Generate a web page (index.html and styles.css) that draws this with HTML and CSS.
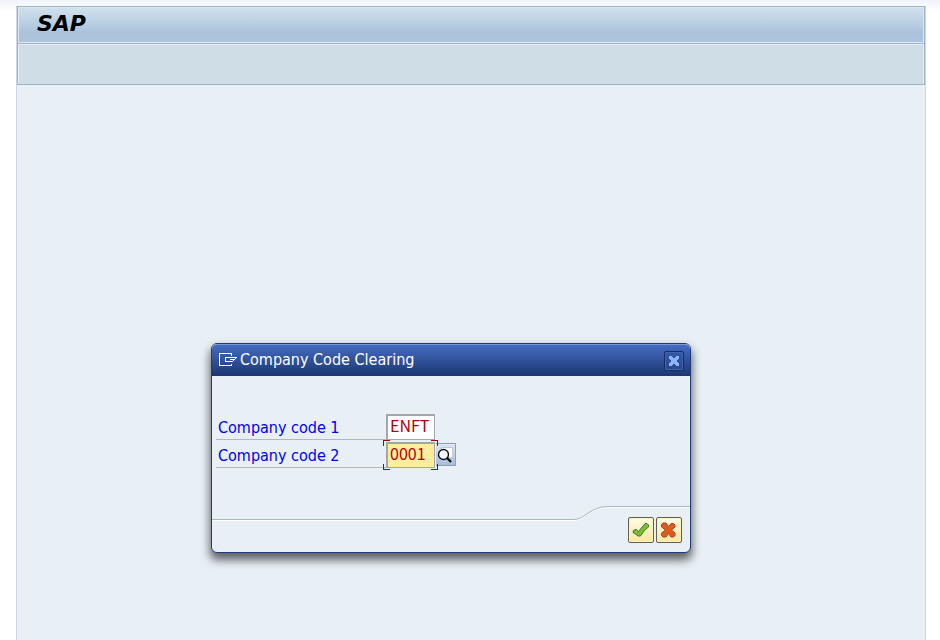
FILE: index.html
```html
<!DOCTYPE html>
<html lang="en">
<head>
  <meta charset="UTF-8">
  <meta name="viewport" content="width=device-width, initial-scale=1.0">
  <title>SAP</title>
  <link rel="stylesheet" href="styles.css">
</head>
<body>
  <div class="session">
    <header class="session-title">
      <h1>SAP</h1>
    </header>
    <div class="toolbar"></div>

    <main class="workspace">
      <form class="dialog" role="dialog" aria-labelledby="dialogTitle">
        <div class="dialog-title">
          <svg class="dialog-icon" width="18" height="14" viewBox="0 0 18 14" shape-rendering="crispEdges" aria-hidden="true">
            <path d="M12.500 3V.5H.5v12h12V11M17.500 4.500H6.500v4H12" fill="none" stroke="#fff"/>
            <path d="M16 5h1v1h-1zM15 6h1v1h-1zM11 6h4v1h-4zM14 7h1v1h-1zM12 8h2v1h-2z" fill="#fff"/>
          </svg>
          <h2 id="dialogTitle">Company Code Clearing</h2>
          <button type="button" class="close-btn" aria-label="Close">
            <svg width="12" height="12" viewBox="0 0 12 12" shape-rendering="crispEdges" aria-hidden="true">
              <path d="M1 1h3v1h1v1h2V2h1V1h3v3h-1v1H9v2h1v1h1v3H8v-1H7V9H5v1H4v1H1V8h1V7h1V5H2V4H1z" fill="#8db3ff"/>
            </svg>
          </button>
        </div>

        <div class="dialog-body">
          <div class="field-row">
            <label for="code1">Company code 1</label>
            <span class="field">
              <input type="text" id="code1" value="ENFT" maxlength="4">
            </span>
          </div>
          <div class="field-row">
            <label for="code2">Company code 2</label>
            <span class="field field-active">
              <input type="text" id="code2" value="0001" maxlength="4">
              <svg class="focus-marks" width="55" height="30" viewBox="0 0 55 30" shape-rendering="crispEdges" aria-hidden="true">
                <path d="M.5 6V.5H7M48 .5h6.500V6M.5 24v5.500H7M48 29.500h6.500V24" fill="none" stroke="#a80000"/>
              </svg>
            </span>
            <button type="button" class="search-help" aria-label="Search help">
              <svg width="18" height="18" viewBox="0 0 18 18" aria-hidden="true">
                <path d="M4.500 1.500h11v10h-11z" fill="#fdfdfd" stroke="#c2c9d6"/>
                <circle cx="6.500" cy="8.500" r="5" fill="#f2f8ff" stroke="#111" stroke-width="1.400"/>
                <path d="M10 12l4 4" stroke="#111" stroke-width="2.400"/>
              </svg>
            </button>
          </div>
        </div>

        <div class="dialog-footer">
          <div class="footer-edge">
            <span class="edge-line"></span>
            <svg class="edge-curve" width="116" height="16" viewBox="0 0 116 16" aria-hidden="true">
              <path d="M0 14.500c11 0 16-13 34-13h82" fill="none" stroke="#fff"/>
              <path d="M0 13.500c11 0 16-13 34-13h82" fill="none" stroke="#a9b6cb"/>
            </svg>
          </div>
          <div class="actions">
            <button type="submit" class="action-btn" aria-label="Continue">
              <svg width="18" height="18" viewBox="0 0 18 18" aria-hidden="true">
                <path d="M1 10l2-1.500h1.500L6.500 10.500l6.500-8h2l1.500 1.500v2l-4 3.500-4 5.500H6L3.500 13 1.500 12z" fill="#7bbd2a" stroke="#397843"/>
              </svg>
            </button>
            <button type="button" class="action-btn" aria-label="Cancel">
              <svg width="18" height="18" viewBox="0 0 18 18" aria-hidden="true">
                <path d="M1.500 3.500L3 2h3l2.500 3.500L11 2.500h2.500L15 4v2l-3.500 3L15 12v2.500L13.500 16H11l-2.500-3.500L6 16H3l-1.500-1.500V12L5.500 9l-4-3z" fill="#df5a1c" stroke="#a34a2c"/>
              </svg>
            </button>
          </div>
        </div>
      </form>
    </main>
  </div>
</body>
</html>
```
FILE: styles.css
```css
* {
  box-sizing: border-box;
}

body {
  margin: 0;
  padding: 6px 14px 0 16px;
  min-height: 100vh;
  display: flex;
  background: linear-gradient(#f1f4fb, #ffffff 12px);
  font-family: "DejaVu Sans Condensed", "Noto Sans", sans-serif;
  font-size: 16px;
}

h1,
h2 {
  margin: 0;
}

.session {
  flex: 1;
  display: flex;
  flex-direction: column;
  border: 1px solid #ccd6e6;
  border-width: 0 1px;
  background: #e8f0f6;
}

.session-title {
  height: 38px;
  padding: 0 19px 2px;
  display: flex;
  align-items: center;
  border: 1px solid #9fb2c9;
  background: linear-gradient(#d2e2ee, #a9c2da 75%, #aec6de);
  box-shadow: inset 0 0 0 1px #dce8f2;
}

.session-title h1 {
  font-family: "DejaVu Sans", sans-serif;
  font-size: 22px;
  line-height: 30px;
  font-style: italic;
  font-weight: 700;
  color: #000;
}

.toolbar {
  height: 41px;
  border: 1px solid #9fb2c9;
  border-top: none;
  background: #cfdde7;
  box-shadow: inset 1px 1px 0 #e6eff6, inset -1px 0 0 #e6eff6;
}

.workspace {
  flex: 1;
  position: relative;
}

.dialog {
  position: absolute;
  top: 258px;
  left: 194px;
  width: 480px;
  border: 1px solid #1f3b78;
  border-radius: 6px;
  background: #e8f0f6;
  box-shadow: 0 6px 10px 1px rgba(0, 0, 0, 0.6);
}

.dialog-title {
  height: 32px;
  padding: 0 6px 0 7px;
  display: flex;
  align-items: center;
  gap: 3px;
  border-top: 1px solid #7997d5;
  border-radius: 5px 5px 0 0;
  background: linear-gradient(#456bc1, #1b3671);
  color: #fff;
}

.dialog-icon {
  margin-bottom: 2px;
}

.dialog-title h2 {
  flex: 1;
  padding-bottom: 2px;
  font-size: 16px;
  line-height: 24px;
  font-weight: 400;
}

button {
  padding: 0;
  display: flex;
  align-items: center;
  justify-content: center;
  cursor: pointer;
}

.close-btn {
  width: 20px;
  height: 20px;
  border: 1px solid #142d63;
  border-radius: 2px;
  background: linear-gradient(#3859a6, #27468b);
  box-shadow: inset 0 0 0 1px #4064b1;
}

.dialog-body {
  height: 130px;
  padding: 38px 4px 0;
}

.field-row {
  height: 28px;
  display: flex;
  align-items: flex-start;
}

.field-row label {
  width: 170px;
  height: 26px;
  padding-left: 2px;
  border-bottom: 1px solid #b5b8bb;
  line-height: 28px;
  color: #0000f0;
}

.field {
  position: relative;
  width: 50px;
}

.field input {
  display: block;
  width: 49px;
  height: 26px;
  padding: 0 2px 5px;
  border: 1px solid #a3a6aa;
  border-width: 2px 1px 1px 2px;
  border-radius: 0;
  outline: none;
  background: #fff;
  font-family: "Noto Sans CJK JP", sans-serif;
  font-size: 16px;
  line-height: 18px;
  color: #b00008;
}

.field-active input {
  background: #ffed9e;
}

.focus-marks {
  position: absolute;
  top: -2px;
  left: -3px;
  pointer-events: none;
}

.search-help {
  width: 20px;
  height: 23px;
  margin-top: 1px;
  border: 1px solid #929eaf;
  border-left: none;
  background: linear-gradient(#dfe7f2, #a9bdda);
}

.footer-edge {
  display: flex;
  align-items: flex-start;
}

.edge-line {
  flex: 1;
  height: 15px;
  border-bottom: 1px solid #fff;
  background: linear-gradient(#a9b6cb, #a9b6cb) bottom / 100% 1px no-repeat;
  background-clip: padding-box;
}

.edge-curve {
  display: block;
}

.actions {
  display: flex;
  justify-content: flex-end;
  gap: 2px;
  margin-top: -5px;
  padding: 0 8px 9px;
}

.action-btn {
  width: 26px;
  height: 26px;
  border: 1px solid #625e55;
  border-radius: 2px;
  background: linear-gradient(#fffce4, #fbe6a0);
  box-shadow: inset 0 0 0 1px #fff3bb;
}
```
